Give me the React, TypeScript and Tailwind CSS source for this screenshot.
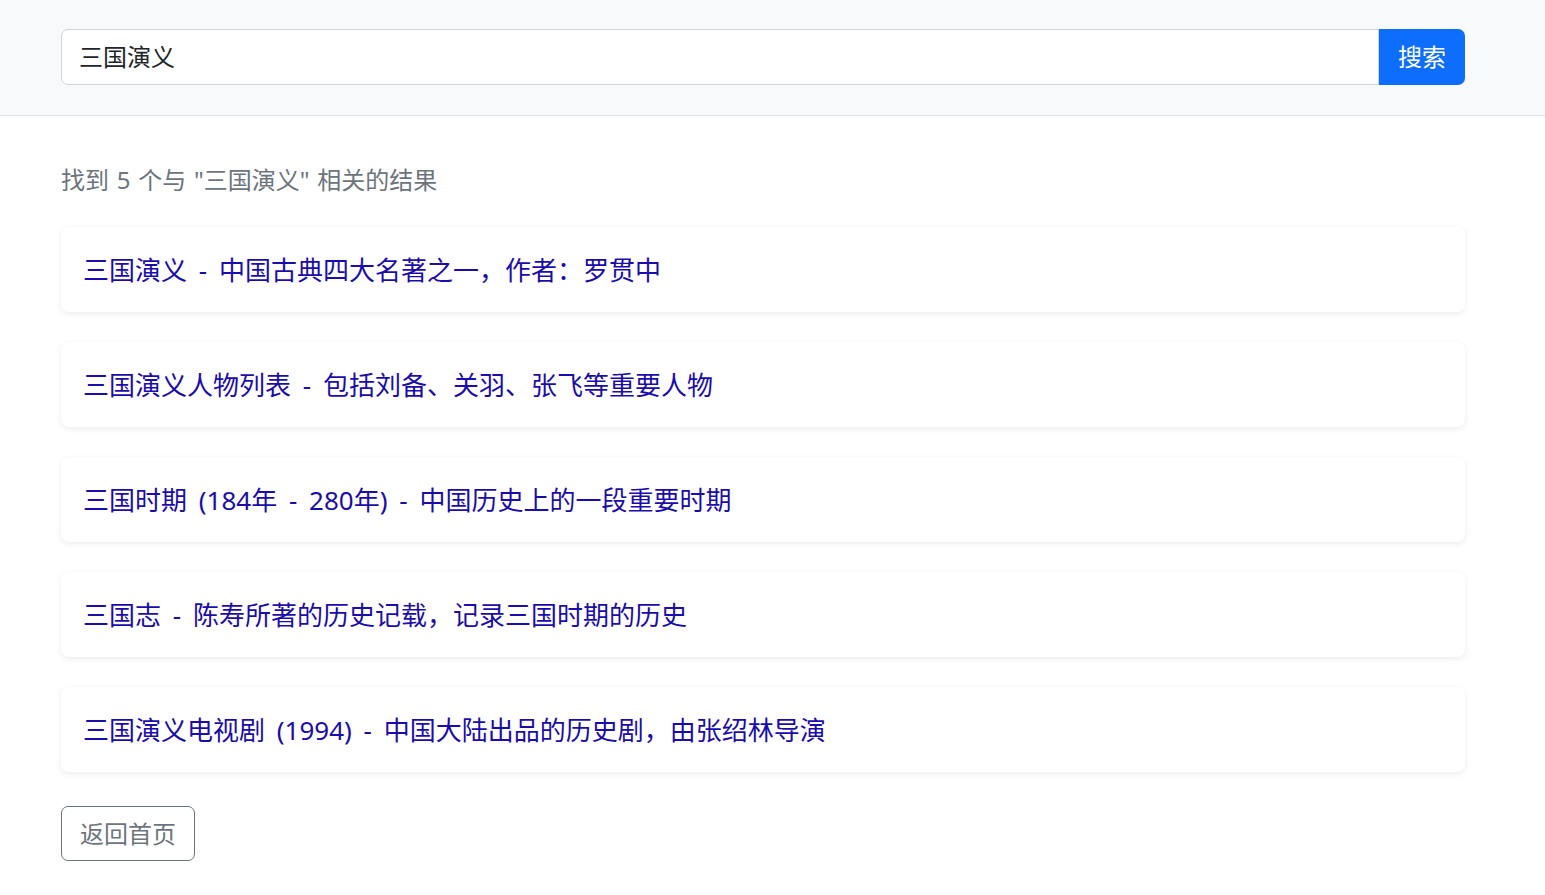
import React from "react";

const results = [
  "三国演义 - 中国古典四大名著之一，作者：罗贯中",
  "三国演义人物列表 - 包括刘备、关羽、张飞等重要人物",
  "三国时期 (184年 - 280年) - 中国历史上的一段重要时期",
  "三国志 - 陈寿所著的历史记载，记录三国时期的历史",
  "三国演义电视剧 (1994) - 中国大陆出品的历史剧，由张绍林导演",
];

export default function App() {
  return (
    <div
      className="min-h-screen bg-white"
      style={{ fontFamily: '"Noto Sans", "Noto Sans CJK SC", sans-serif' }}
    >
      {/* Search bar */}
      <div className="bg-[#f8f9fa] border-b border-[#dee2e6] pt-[29px] pb-[30px]">
        <div className="ml-[61px] mr-[80px] flex">
          <input
            className="flex-1 h-[56px] bg-white border border-[#ced4da] rounded-l-[7px] px-[17px] pb-[3px] text-[24px] text-[#212529] outline-none"
            defaultValue="三国演义"
          />
          <button className="w-[86px] h-[56px] bg-[#0d6efd] text-white text-[24px] rounded-r-[7px]">
            搜索
          </button>
        </div>
      </div>

      {/* Results */}
      <div className="ml-[61px] mr-[80px] pt-[48px]">
        <p className="text-[24px] text-[#6c757d] leading-[32px] mb-[31px] [word-spacing:1.5px]">
          找到 5 个与 "三国演义" 相关的结果
        </p>
        <div className="flex flex-col gap-[30px]">
          {results.map((r, i) => (
            <div
              key={i}
              className="h-[85px] flex items-center px-[22px] bg-white rounded-[8px] shadow-[0_2px_6px_rgba(0,0,0,0.08)]"
            >
              <a href="#" className="text-[26px] text-[#1a0dab] leading-none [word-spacing:5px]">
                {r}
              </a>
            </div>
          ))}
        </div>
        <button className="mt-[34px] h-[55px] px-[18px] border border-[#6c757d] rounded-[7px] text-[24px] text-[#6c757d]">
          返回首页
        </button>
      </div>
    </div>
  );
}
